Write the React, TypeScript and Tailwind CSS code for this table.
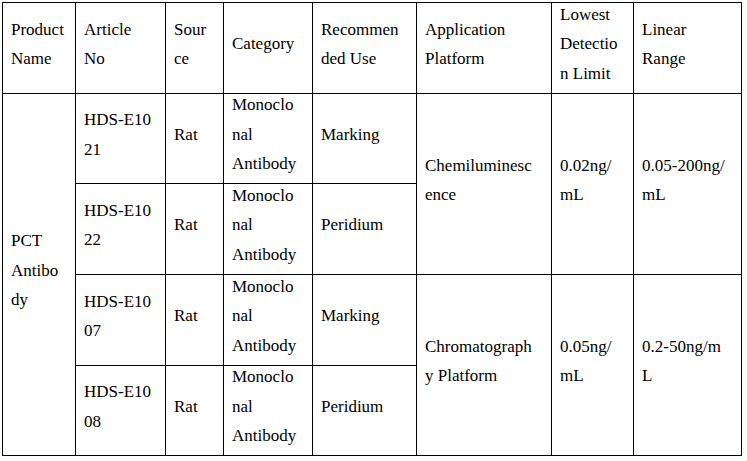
import React from "react";

type CellProps = { lines: string[]; className?: string };

function Cell({ lines, className = "" }: CellProps) {
  return (
    <div className={`bg-white flex items-center pl-[8px] pb-[8px] ${className}`}>
      <div className="leading-[29.5px] font-['Times_New_Roman','Liberation_Serif',Times,serif]">
        {lines.map((l, i) => (
          <div key={i} className="font-['Times_New_Roman','Liberation_Serif',Times,serif]">
            {l}
          </div>
        ))}
      </div>
    </div>
  );
}

export default function App() {
  const mono = ["Monoclo", "nal", "Antibody"];
  return (
    <div className="bg-white w-[747px] h-[461px] pt-[2px] pl-[2px] text-black text-[17px] font-['Times_New_Roman','Liberation_Serif',Times,serif]">
      <div className="grid w-fit bg-black p-px gap-px grid-cols-[72px_89px_57px_88px_103px_134px_81px_107px] grid-rows-[90px_89px_90px_90px_89px]">
        <Cell lines={["Product", "Name"]} />
        <Cell lines={["Article", "No"]} />
        <Cell lines={["Sour", "ce"]} />
        <Cell lines={["Category"]} />
        <Cell lines={["Recommen", "ded Use"]} />
        <Cell lines={["Application", "Platform"]} />
        <Cell lines={["Lowest", "Detectio", "n Limit"]} />
        <Cell lines={["Linear", "Range"]} />

        <Cell lines={["PCT", "Antibo", "dy"]} className="row-span-4" />
        <Cell lines={["HDS-E10", "21"]} />
        <Cell lines={["Rat"]} />
        <Cell lines={mono} />
        <Cell lines={["Marking"]} />
        <Cell lines={["Chemiluminesc", "ence"]} className="row-span-2" />
        <Cell lines={["0.02ng/", "mL"]} className="row-span-2" />
        <Cell lines={["0.05-200ng/", "mL"]} className="row-span-2" />

        <Cell lines={["HDS-E10", "22"]} />
        <Cell lines={["Rat"]} />
        <Cell lines={mono} />
        <Cell lines={["Peridium"]} />

        <Cell lines={["HDS-E10", "07"]} />
        <Cell lines={["Rat"]} />
        <Cell lines={mono} />
        <Cell lines={["Marking"]} />
        <Cell lines={["Chromatograph", "y Platform"]} className="row-span-2" />
        <Cell lines={["0.05ng/", "mL"]} className="row-span-2" />
        <Cell lines={["0.2-50ng/m", "L"]} className="row-span-2" />

        <Cell lines={["HDS-E10", "08"]} />
        <Cell lines={["Rat"]} />
        <Cell lines={mono} />
        <Cell lines={["Peridium"]} />
      </div>
    </div>
  );
}
